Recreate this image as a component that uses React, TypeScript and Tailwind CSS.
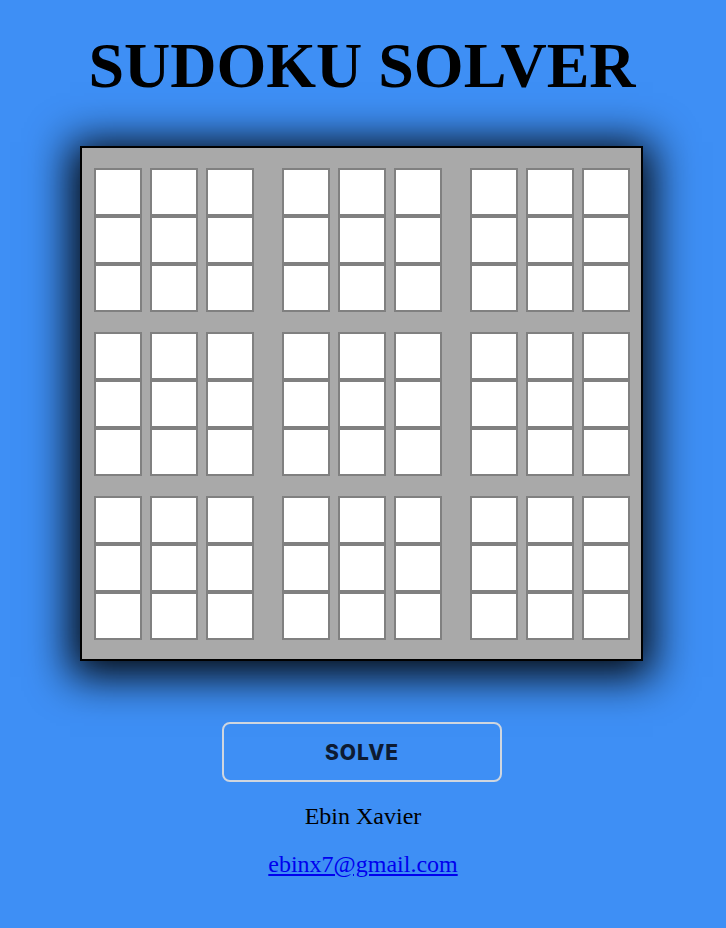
import React from "react";

const serif = { fontFamily: '"Liberation Serif", "Times New Roman", serif' };

function Box() {
  return (
    <div className="flex gap-[8px]">
      {[0, 1, 2].map((c) => (
        <div key={c} className="flex flex-col">
          {[0, 1, 2].map((r) => (
            <div
              key={r}
              className="w-[48px] h-[48px] bg-white border-2 border-[#808080]"
            />
          ))}
        </div>
      ))}
    </div>
  );
}

export default function App() {
  return (
    <div
      className="min-h-[928px] w-full bg-[#3e8ff5] flex flex-col items-center pt-[30px]"
      style={serif}
    >
      {/* Title */}
      <h1 className="text-[64px] leading-[72px] font-bold text-black mr-[2px]">
        SUDOKU SOLVER
      </h1>

      {/* Board */}
      <div className="mt-[44px] mr-[3px] w-[563px] h-[515px] border-2 border-black bg-[#a9a9a9] pt-[20px] pl-[12px] shadow-[0_6px_40px_10px_rgba(0,0,0,0.95)]">
        <div className="flex flex-col gap-[20px]">
          {[0, 1, 2].map((br) => (
            <div key={br} className="flex gap-[28px]">
              {[0, 1, 2].map((bc) => (
                <Box key={bc} />
              ))}
            </div>
          ))}
        </div>
      </div>

      {/* Actions */}
      <button
        className="mt-[61px] mr-[2px] w-[280px] h-[60px] pt-[2px] rounded-[8px] border-2 border-[#cfd6df] bg-transparent text-[21px] font-extrabold tracking-[1px] text-[#0d1b33]"
        style={{ fontFamily: 'Inter, "Liberation Sans", sans-serif' }}
      >
        SOLVE
      </button>

      <p className="mt-[20px] h-[28px] text-[24px] leading-[28px] text-black">
        Ebin Xavier
      </p>
      <a
        href="mailto:ebinx7@gmail.com"
        className="mt-[20px] text-[24px] leading-[28px] text-[#0000ee] underline"
      >
        ebinx7@gmail.com
      </a>
    </div>
  );
}
